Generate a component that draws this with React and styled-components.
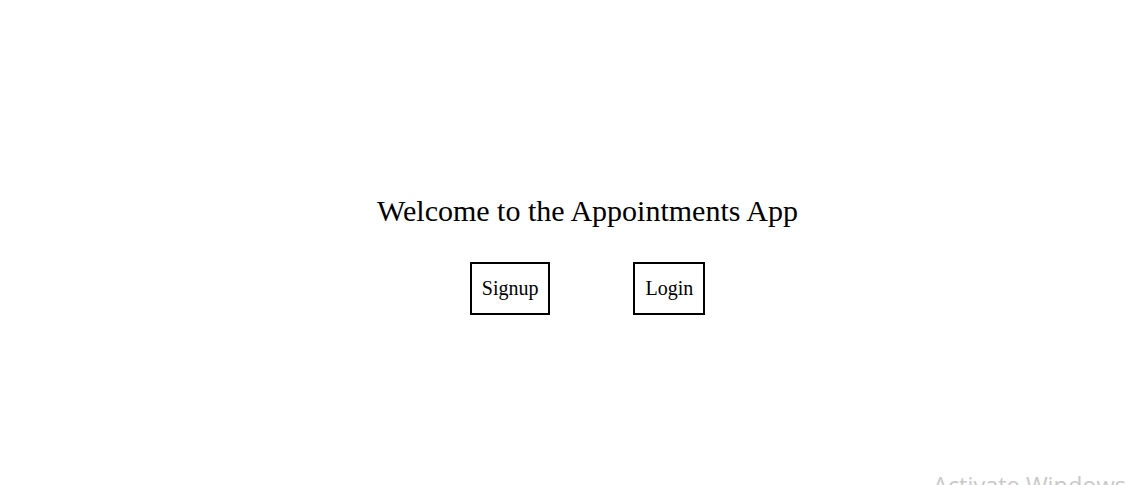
import styled, { createGlobalStyle } from "styled-components";

const GlobalStyle = createGlobalStyle`
  html, body {
    margin: 0;
    padding: 0;
    background: #fff;
    overflow: hidden;
  }
`;

const Page = styled.div`
  position: relative;
  width: 100vw;
  height: 100vh;
  display: flex;
  flex-direction: column;
  align-items: center;
  justify-content: center;
  padding: 24px 0 0 30px;
  box-sizing: border-box;
  font-family: "Liberation Serif", "Times New Roman", serif;
  color: #000;
`;

const Title = styled.h1`
  font-size: 30px;
  font-weight: 400;
  margin: 0 0 34px 0;
`;

const Buttons = styled.div`
  display: flex;
  gap: 83px;
`;

const Button = styled.button`
  font-family: inherit;
  font-size: 20px;
  background: #fff;
  color: #000;
  border: 2px solid #000;
  padding: 13px 10px;
  cursor: pointer;
`;

const Watermark = styled.div`
  position: absolute;
  left: 933px;
  top: 469px;
  font-family: "Open Sans", "Noto Sans", sans-serif;
  font-size: 23.5px;
  color: #c9c9c9;
  white-space: nowrap;
`;

const App = () => {
  return (
    <>
      <GlobalStyle />
      <Page>
        <Title>Welcome to the Appointments App</Title>
        <Buttons>
          <Button>Signup</Button>
          <Button>Login</Button>
        </Buttons>
        <Watermark>Activate Windows</Watermark>
      </Page>
    </>
  );
};

export default App;
